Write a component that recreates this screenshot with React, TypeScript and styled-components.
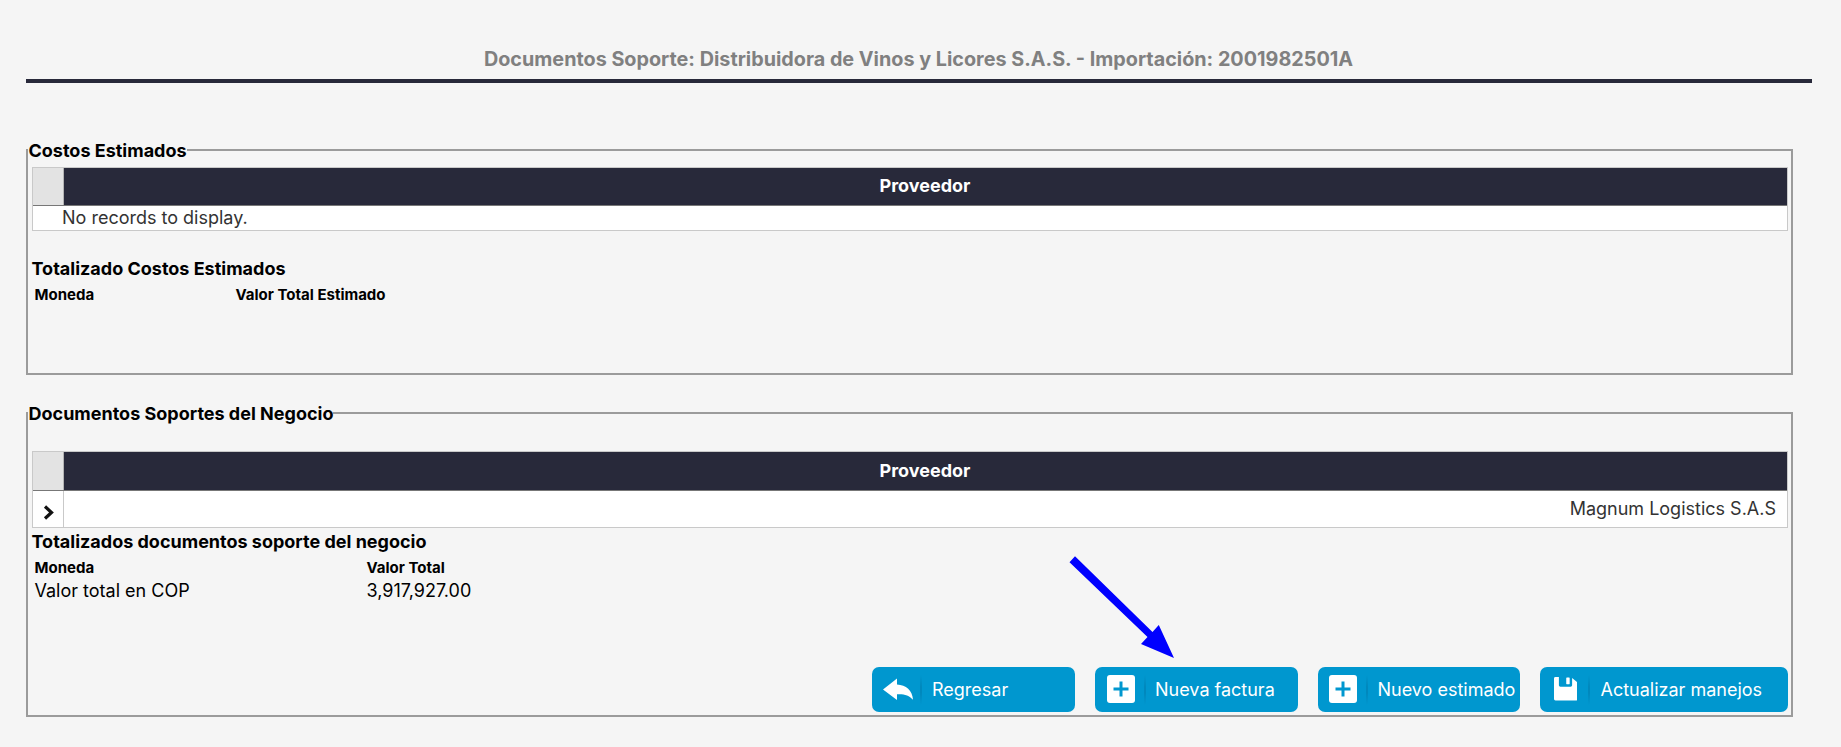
import * as React from "react";
import styled, { createGlobalStyle } from "styled-components";

const colorTokens = {
  page: "#f5f5f5",
  navy: "#28293a",
  blue: "#0097cf",
  border: "#9b9b9b",
  gridBorder: "#c9c9c9",
  title: "#808080",
};

const GlobalStyle = createGlobalStyle`
  * {
    box-sizing: border-box;
  }
  body {
    margin: 0;
    background: ${colorTokens.page};
    color: #000;
    font-family: Inter, "Liberation Sans", sans-serif;
    font-size: 18px;
    line-height: 22px;
  }
`;

const Page = styled.main`
  position: relative;
  height: 747px;
  padding: 0 29px 0 26px;
  overflow: hidden;
`;

const Title = styled.h1`
  height: 83px;
  margin: 0;
  padding: 47px 1px 0 0;
  border-bottom: 4px solid ${colorTokens.navy};
  color: ${colorTokens.title};
  font-size: 19.8px;
  font-weight: 700;
  line-height: 24px;
  text-align: center;
`;

const Panel = styled.fieldset<{ $height: number; $top: number }>`
  display: block;
  min-width: 0;
  width: 1767px;
  height: ${props => props.$height}px;
  margin: ${props => props.$top}px 0 0;
  padding: 0 3px 0 4px;
  border: 2px solid ${colorTokens.border};
`;

const Legend = styled.legend`
  height: 22px;
  margin-left: -4px;
  padding: 1px 0 0 0.5px;
  font-weight: 700;
`;

const Grid = styled.div<{ $top: number }>`
  margin-top: ${props => props.$top}px;
  border: 1px solid ${colorTokens.gridBorder};
  background: #fff;
`;

const GridHead = styled.div<{ $height: number }>`
  display: flex;
  height: ${props => props.$height}px;
  border-bottom: 1px solid #777;
`;

const HeadSpacer = styled.div`
  width: 31px;
  border-right: 1px solid #b4b4b4;
  background: #e3e3e3;
`;

const HeadCell = styled.div`
  display: flex;
  flex: 1;
  align-items: center;
  justify-content: center;
  padding: 0 1px 1px 0;
  background: ${colorTokens.navy};
  color: #fff;
  font-weight: 700;
`;

const EmptyRow = styled.div`
  height: 24px;
  padding: 1px 0 0 29px;
  color: #333;
`;

const Row = styled.div`
  display: flex;
  height: 36px;
`;

const ExpandCell = styled.div`
  display: flex;
  align-items: center;
  justify-content: center;
  width: 31px;
  padding: 6px 0 0 1px;
  border-right: 1px solid ${colorTokens.gridBorder};
`;

const ProviderCell = styled.div`
  flex: 1;
  padding: 7px 11px 0 0;
  color: #333;
  text-align: right;
`;

const Subtitle = styled.h2<{ $top: number }>`
  margin: ${props => props.$top}px 0 0 -0.5px;
  font-size: 18px;
  font-weight: 700;
  line-height: 22px;
`;

const Totals = styled.div<{ $first: number }>`
  display: grid;
  grid-template-columns: ${props => props.$first}px auto;
  row-gap: 1px;
  justify-content: start;
  padding: 4px 0 0 2.5px;
`;

const TotalsHead = styled.div`
  font-size: 15px;
  font-weight: 700;
`;

const TotalsValue = styled.div``;

const Toolbar = styled.div`
  display: flex;
  justify-content: flex-end;
  gap: 20px;
  margin-top: 65px;
`;

const Button = styled.button<{ $width: number; $label: number }>`
  display: grid;
  grid-template-columns: ${props => props.$label}px auto;
  align-items: center;
  justify-content: start;
  width: ${props => props.$width}px;
  height: 45px;
  padding: 0;
  border: 0;
  border-radius: 7px;
  background: ${colorTokens.blue};
  color: #fff;
  font: inherit;
  text-align: left;
  white-space: nowrap;
`;

const IconSlot = styled.span<{ $left: number; $width: number }>`
  display: flex;
  align-items: center;
  width: ${props => props.$width}px;
  height: 30px;
  padding: 0 0 1px ${props => props.$left}px;
  background: linear-gradient(transparent, #0088bd 40%, #0088bd 60%, transparent)
    right / 2px 100% no-repeat;
`;

// lies over the panel and points at "Nueva factura"
const Pointer = styled.svg`
  position: absolute;
  left: 1069px;
  top: 556px;
`;

const BackIcon = () => (
  <svg width="30" height="23" viewBox="0 0 30 23" fill="#fff">
    <path d="M0 11.5 14 .5V6.5C23 7 29.5 12.500 30 21.800C26 17 21 15.800 14 16.200V22Z" />
  </svg>
);

const PlusIcon = () => (
  <svg width="28" height="28" viewBox="0 0 28 28">
    <rect width="28" height="28" rx="3" fill="#fff" />
    <path d="M14 6.500v15M6.500 14h15" stroke={colorTokens.blue} strokeWidth="3" />
  </svg>
);

const SaveIcon = () => (
  <svg width="23.500" height="23.500" viewBox="0 0 24 24">
    <path
      d="M1.500 0H5V8.500Q5 10 6.500 10H17Q18.500 10 18.500 8.500V1L24 5.500V22.500Q24 24 22.500 24H1.500Q0 24 0 22.500V1.500Q0 0 1.500 0Z"
      fill="#fff"
    />
    <rect x="12.500" y="0.500" width="3.500" height="7" rx="0.500" fill="#fff" />
  </svg>
);

const ExpandIcon = () => (
  <svg width="11" height="15" viewBox="0 0 11 15">
    <path d="M2 1.500 8.500 7.500 2 13.500" fill="none" stroke="#111" strokeWidth="3.200" />
  </svg>
);

const actions = [
  { label: "Regresar", icon: <BackIcon />, width: 203, text: 60, left: 11, slot: 50 },
  { label: "Nueva factura", icon: <PlusIcon />, width: 203, text: 60, left: 12, slot: 51 },
  { label: "Nuevo estimado", icon: <PlusIcon />, width: 202, text: 59.5, left: 11, slot: 50 },
  { label: "Actualizar manejos", icon: <SaveIcon />, width: 248, text: 60.5, left: 13.5, slot: 50 },
];

const App = () => (
  <>
    <GlobalStyle />
    <Page>
      <Title>
        Documentos Soporte: Distribuidora de Vinos y Licores S.A.S. - Importación: 2001982501A
      </Title>

      <Panel $top={56} $height={236}>
        <Legend>Costos Estimados</Legend>
        <Grid $top={6}>
          <GridHead $height={38}>
            <HeadSpacer />
            <HeadCell>Proveedor</HeadCell>
          </GridHead>
          <EmptyRow>No records to display.</EmptyRow>
        </Grid>
        <Subtitle $top={27}>Totalizado Costos Estimados</Subtitle>
        <Totals $first={201}>
          <TotalsHead>Moneda</TotalsHead>
          <TotalsHead>Valor Total Estimado</TotalsHead>
        </Totals>
      </Panel>

      <Panel $top={27} $height={315}>
        <Legend>Documentos Soportes del Negocio</Legend>
        <Grid $top={27}>
          <GridHead $height={39}>
            <HeadSpacer />
            <HeadCell>Proveedor</HeadCell>
          </GridHead>
          <Row>
            <ExpandCell>
              <ExpandIcon />
            </ExpandCell>
            <ProviderCell>Magnum Logistics S.A.S</ProviderCell>
          </Row>
        </Grid>
        <Subtitle $top={3}>Totalizados documentos soporte del negocio</Subtitle>
        <Totals $first={332}>
          <TotalsHead>Moneda</TotalsHead>
          <TotalsHead>Valor Total</TotalsHead>
          <TotalsValue>Valor total en COP</TotalsValue>
          <TotalsValue>3,917,927.00</TotalsValue>
        </Totals>
        <Toolbar>
          {actions.map(({ label, icon, width, text, left, slot }) => (
            <Button key={label} type="button" $width={width} $label={text}>
              <IconSlot $left={left} $width={slot}>
                {icon}
              </IconSlot>
              {label}
            </Button>
          ))}
        </Toolbar>
      </Panel>

      <Pointer width="106" height="102" viewBox="0 0 106 102" fill="#00f">
        <path d="M6 .3 83.500 76 89.800 69 105 102 72 88 78.500 81 .5 6.200Z" />
      </Pointer>
    </Page>
  </>
);

export default App;
